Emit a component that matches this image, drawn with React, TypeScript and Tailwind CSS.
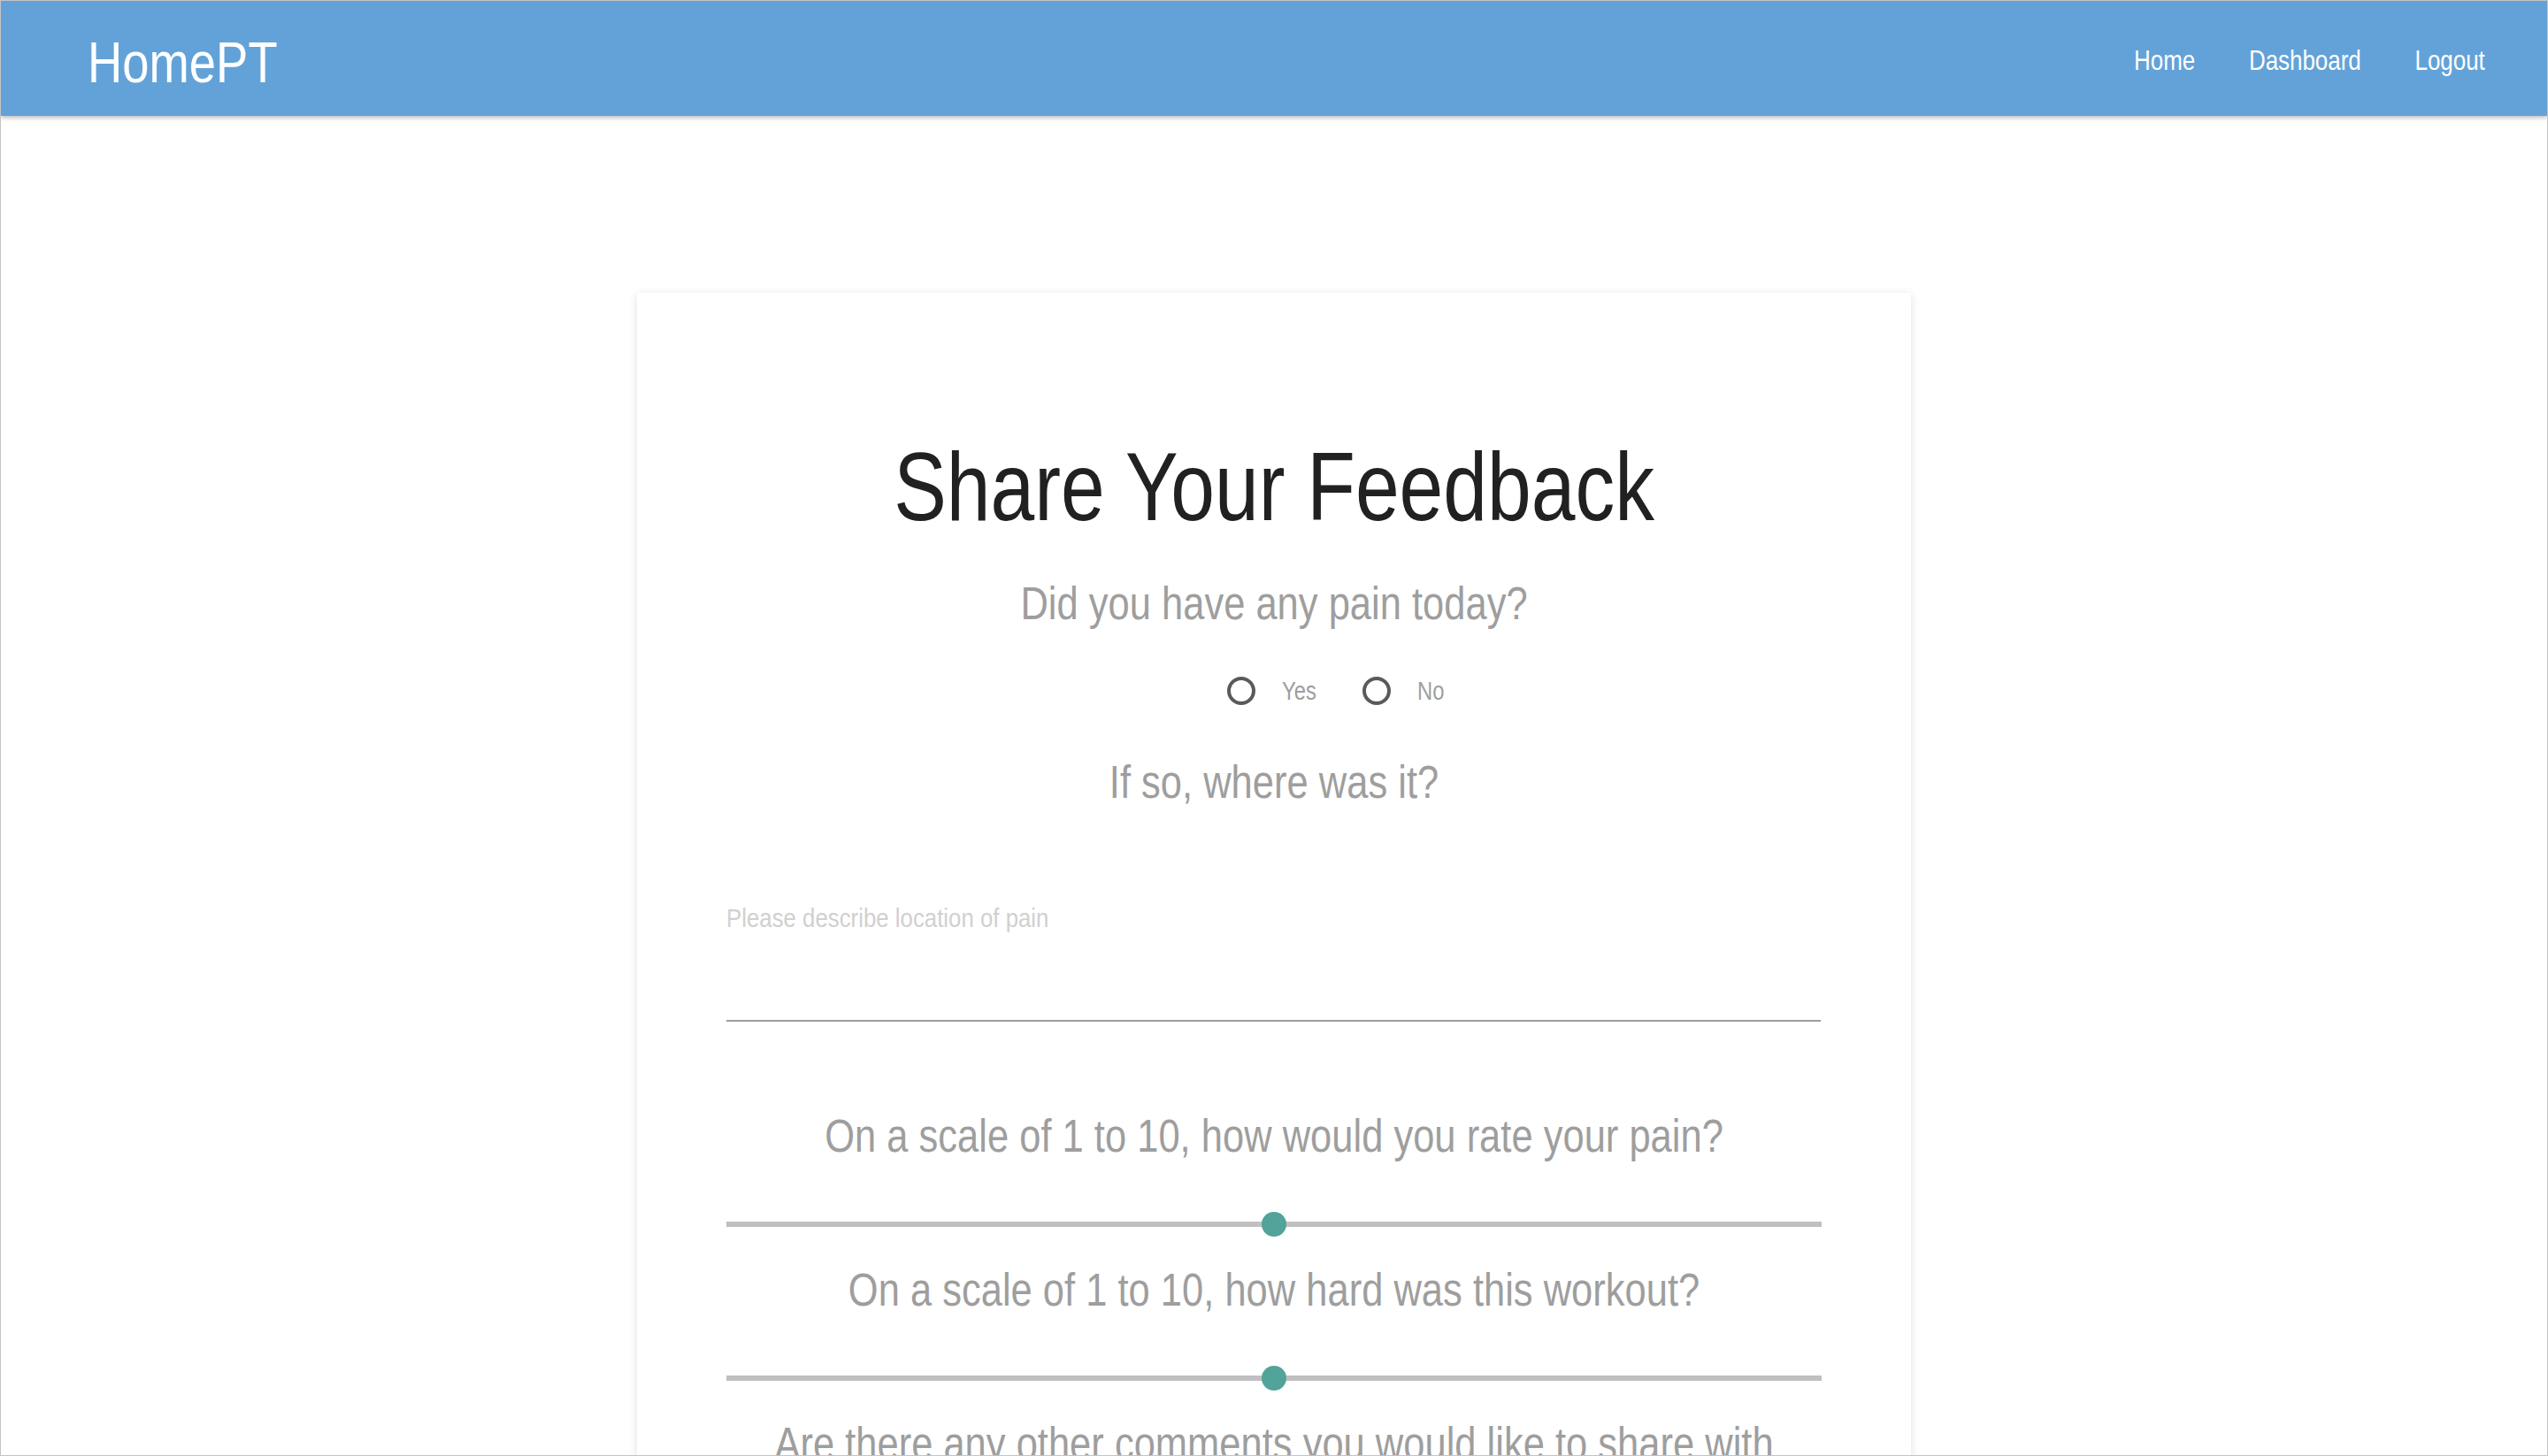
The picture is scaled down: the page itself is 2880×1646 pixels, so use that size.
import React, { useState } from 'react';

// no narrow face is installed, so Liberation Sans is squeezed to Narrow proportions
const font = { fontFamily: '"Liberation Sans Narrow", "Liberation Sans", Arial, sans-serif' };

const Narrow: React.FC<{ className?: string; tight?: boolean; children: React.ReactNode }> = ({ className = '', tight, children }) => (
  <div className={`flex justify-center ${className}`}>
    <span className={`block w-[1460px] shrink-0 text-center ${tight ? 'scale-x-[0.82]' : 'scale-x-[0.853]'}`}>{children}</span>
  </div>
);

const questionClass = 'text-[51px] leading-none text-[#9e9e9e]';

const RangeSlider: React.FC<{ value: number; onChange: (v: number) => void }> = ({ value, onChange }) => {
  const pct = ((value - 1) / 9) * 100;
  return (
    <div
      className="relative h-[28px] w-full flex items-center cursor-pointer"
      role="slider"
      aria-valuemin={1}
      aria-valuemax={10}
      aria-valuenow={value}
      onClick={(e) => {
        const rect = e.currentTarget.getBoundingClientRect();
        const ratio = (e.clientX - rect.left) / rect.width;
        onChange(Math.round(ratio * 9) + 1);
      }}
    >
      <div className="h-[6px] w-full bg-[#c2bfc2]" />
      <div
        className="absolute top-0 h-[28px] w-[28px] -ml-[14px] rounded-full bg-[#52a399]"
        style={{ left: `${pct}%` }}
      />
    </div>
  );
};

const RadioOption: React.FC<{ label: string; checked: boolean; onSelect: () => void }> = ({ label, checked, onSelect }) => (
  <button onClick={onSelect} className="flex items-center gap-[30px] focus:outline-none">
    <span className="flex h-[32px] w-[32px] items-center justify-center rounded-full border-[4px] border-[#5a5a5a]">
      {checked && <span className="h-[14px] w-[14px] rounded-full bg-[#52a399]" />}
    </span>
    <span className="inline-block origin-left scale-x-[0.82] text-[29px] leading-none text-[#9e9e9e]">{label}</span>
  </button>
);

const App: React.FC = () => {
  const [hadPain, setHadPain] = useState<'yes' | 'no' | null>(null);
  const [location, setLocation] = useState('');
  const [painLevel, setPainLevel] = useState(5.5);
  const [difficulty, setDifficulty] = useState(5.5);

  return (
    <div className="h-screen overflow-hidden bg-white border border-[#c4c4c4]" style={font}>
      <nav className="relative z-10 flex h-[130px] items-start justify-between bg-[#63a2d8] pl-[98px] pr-[70px] shadow-[0_2px_5px_rgba(0,0,0,0.28)]">
        <a href="#" className="mt-[38px] inline-block origin-left scale-x-[0.85] text-[64px] leading-none text-white">
          HomePT
        </a>
        <ul className="mt-[51px] flex origin-right scale-x-[0.81] gap-[75px] text-[32px] leading-none text-white">
          <li><a href="#">Home</a></li>
          <li><a href="#">Dashboard</a></li>
          <li><a href="#">Logout</a></li>
        </ul>
      </nav>

      <div className="mx-auto mt-[200px] w-[1440px] bg-white px-[101px] pt-[165px] pb-[80px] shadow-[0_2px_10px_rgba(0,0,0,0.12)]">
        <Narrow tight className="text-[109px] leading-none text-[#212121]">
          <h1>Share Your Feedback</h1>
        </Narrow>

        <Narrow className={`${questionClass} mt-[52px]`}>Did you have any pain today?</Narrow>

        <div className="mt-[57px] flex pl-[566px]">
          <div className="flex gap-[44px]">
            <RadioOption label="Yes" checked={hadPain === 'yes'} onSelect={() => setHadPain('yes')} />
            <RadioOption label="No" checked={hadPain === 'no'} onSelect={() => setHadPain('no')} />
          </div>
        </div>

        <Narrow className={`${questionClass} mt-[62px]`}>If so, where was it?</Narrow>

        <textarea
          value={location}
          onChange={(e) => setLocation(e.target.value)}
          placeholder="Please describe location of pain"
          className="mt-[114px] block h-[131px] w-[1390px] origin-left scale-x-[0.89] resize-none border-b-2 border-[#9e9e9e] p-0 text-[29px] leading-none text-[#555] placeholder:text-[#d0d0d0] focus:outline-none"
        />

        <Narrow className={`${questionClass} mt-[104px]`}>On a scale of 1 to 10, how would you rate your pain?</Narrow>
        <div className="mt-[60px]">
          <RangeSlider value={painLevel} onChange={setPainLevel} />
        </div>

        <Narrow className={`${questionClass} mt-[35px]`}>On a scale of 1 to 10, how hard was this workout?</Narrow>
        <div className="mt-[60px]">
          <RangeSlider value={difficulty} onChange={setDifficulty} />
        </div>

        <Narrow className={`${questionClass} mt-[35px]`}>
          Are there any other comments you would like to share with
          <br />
          your therapist?
        </Narrow>
        <textarea
          placeholder="Comments"
          className="mt-[80px] block h-[131px] w-[1390px] origin-left scale-x-[0.89] resize-none border-b-2 border-[#9e9e9e] p-0 text-[29px] leading-none placeholder:text-[#d0d0d0] focus:outline-none"
        />
      </div>
    </div>
  );
};

export default App;
